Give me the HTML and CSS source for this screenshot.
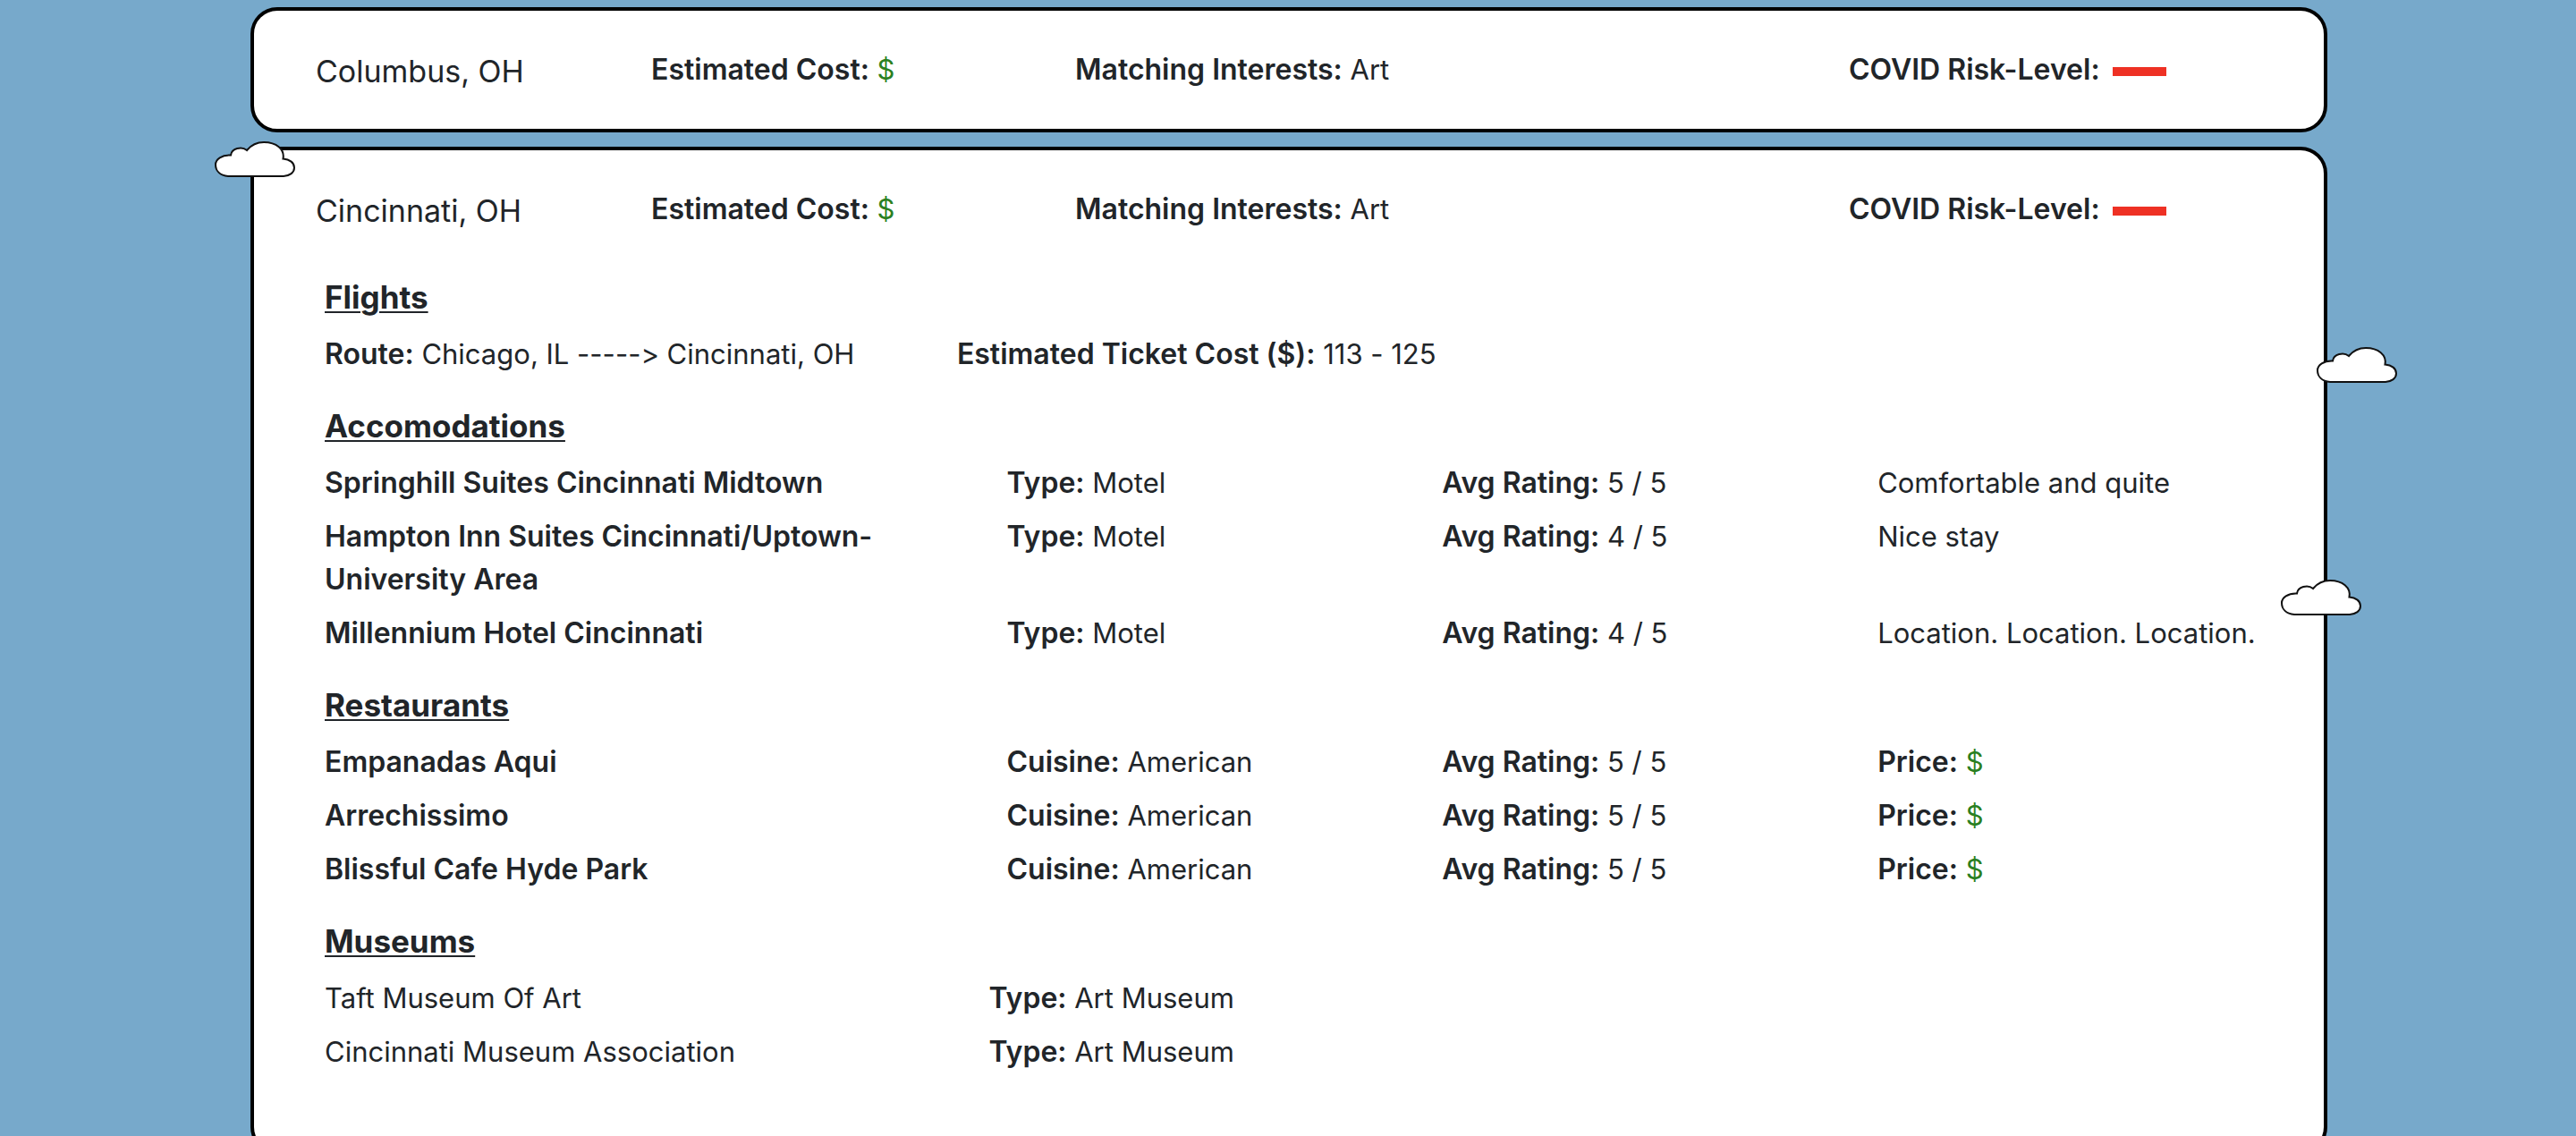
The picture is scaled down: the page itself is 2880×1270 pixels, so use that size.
FILE: index.html
```html
<!DOCTYPE html>
<html lang="en">
<head>
<meta charset="utf-8">
<title>Trip results</title>
<link rel="stylesheet" href="styles.css">
</head>
<body>
<svg class="defs" width="0" height="0" aria-hidden="true">
  <symbol id="cloud" viewBox="0 0 90 40">
    <path d="M15 39C6 38 1 33 1 26C1 20 8 15 18 15.500C19 8 30 5 36 10C41 4 48 1 55 1C69 1 78.500 9 76.500 19.500C84 20 89 24 89 29.500C89 35 84 38.500 77 39Z"/>
  </symbol>
</svg>

<main class="results">
  <article class="card">
    <header class="summary">
      <h2 class="city">Columbus, OH</h2>
      <p><b>Estimated Cost:</b> <span class="money">$</span></p>
      <p><b>Matching Interests:</b> Art</p>
      <p class="risk"><b>COVID Risk-Level:</b><span class="risk-bar" role="img" aria-label="High"></span></p>
    </header>
  </article>

  <article class="card card-open">
    <header class="summary">
      <h2 class="city">Cincinnati, OH</h2>
      <p><b>Estimated Cost:</b> <span class="money">$</span></p>
      <p><b>Matching Interests:</b> Art</p>
      <p class="risk"><b>COVID Risk-Level:</b><span class="risk-bar" role="img" aria-label="High"></span></p>
    </header>

    <div class="details">
      <section>
        <h3>Flights</h3>
        <table class="flights">
          <tr><td><b>Route:</b> Chicago, IL -----&gt; Cincinnati, OH</td><td><b>Estimated Ticket Cost ($):</b> 113 - 125</td></tr>
        </table>
      </section>

      <section>
        <h3>Accomodations</h3>
        <table class="places">
          <tr><th scope="row">Springhill Suites Cincinnati Midtown</th><td><b>Type:</b> Motel</td><td><b>Avg Rating:</b> 5 / 5</td><td>Comfortable and quite</td></tr>
          <tr><th scope="row">Hampton Inn Suites Cincinnati/Uptown-University Area</th><td><b>Type:</b> Motel</td><td><b>Avg Rating:</b> 4 / 5</td><td>Nice stay</td></tr>
          <tr><th scope="row">Millennium Hotel Cincinnati</th><td><b>Type:</b> Motel</td><td><b>Avg Rating:</b> 4 / 5</td><td>Location. Location. Location.</td></tr>
        </table>
      </section>

      <section>
        <h3>Restaurants</h3>
        <table class="places">
          <tr><th scope="row">Empanadas Aqui</th><td><b>Cuisine:</b> American</td><td><b>Avg Rating:</b> 5 / 5</td><td><b>Price:</b> <span class="money">$</span></td></tr>
          <tr><th scope="row">Arrechissimo</th><td><b>Cuisine:</b> American</td><td><b>Avg Rating:</b> 5 / 5</td><td><b>Price:</b> <span class="money">$</span></td></tr>
          <tr><th scope="row">Blissful Cafe Hyde Park</th><td><b>Cuisine:</b> American</td><td><b>Avg Rating:</b> 5 / 5</td><td><b>Price:</b> <span class="money">$</span></td></tr>
        </table>
      </section>

      <section>
        <h3>Museums</h3>
        <table class="museums">
          <tr><td>Taft Museum Of Art</td><td><b>Type:</b> Art Museum</td></tr>
          <tr><td>Cincinnati Museum Association</td><td><b>Type:</b> Art Museum</td></tr>
        </table>
      </section>
    </div>
  </article>
</main>

<svg class="cloud cloud-1" aria-hidden="true"><use href="#cloud"/></svg>
<svg class="cloud cloud-2" aria-hidden="true"><use href="#cloud"/></svg>
<svg class="cloud cloud-3" aria-hidden="true"><use href="#cloud"/></svg>
</body>
</html>
```
FILE: styles.css
```css
* { box-sizing: border-box; }

html { height: 100%; overflow: hidden; }

body {
  margin: 0;
  height: 100%;
  position: relative;
  background: #77a9cb;
  color: #212529;
  font: 400 31px/48px Inter, "Liberation Sans", sans-serif;
  font-feature-settings: "calt" 0;
  overflow-x: hidden;
  overflow-y: auto;
  scrollbar-width: none;
}

.defs { position: absolute; }

h2, h3, p { margin: 0; }
b, th { font-size: 32px; font-weight: 600; }

.results {
  display: flex;
  flex-direction: column;
  gap: 16px;
  padding: 8px 278px 0 280px;
}

.card {
  background: #fff;
  border: 4px solid #000;
  border-radius: 30px;
}

.card-open { padding-bottom: 80px; }

/* city, cost, interests, risk */
.summary {
  display: grid;
  grid-template-columns: 375fr 474fr 865fr 531fr;
  align-items: center;
  min-height: 132px;
  padding: 4px 0 0 69px;
}

.summary p { padding-bottom: 4px; }

.city { font-size: 34px; font-weight: 400; }

.money { color: #2b8021; }

.risk {
  display: flex;
  align-items: center;
  gap: 14px;
}

.risk-bar {
  width: 60px;
  height: 10px;
  margin-top: 4px;
  background: #ee3124;
}

.details {
  display: flex;
  flex-direction: column;
  gap: 26px;
  padding: 8px 12px 0 79px;
}

h3 {
  margin-bottom: 10px;
  font-size: 35px;
  font-weight: 700;
  line-height: 48px;
  text-decoration: underline;
  text-decoration-thickness: 2px;
  text-underline-offset: 3px;
}

table {
  width: 100%;
  table-layout: fixed;
  border-collapse: collapse;
}

th, td {
  padding: 6px 0;
  text-align: left;
  vertical-align: top;
}

th { padding-right: 100px; }

.flights td:first-child { width: 31.8%; }
.places th { width: 34.3%; }
.museums td:first-child { width: 33.4%; }

.cloud {
  position: absolute;
  width: 90px;
  height: 40px;
  fill: #fff;
  stroke: #111;
  stroke-width: 2;
}

.cloud-1 { left: 240px; top: 158px; }
.cloud-2 { right: 200px; top: 388px; }
.cloud-3 { right: 240px; top: 648px; }
```
